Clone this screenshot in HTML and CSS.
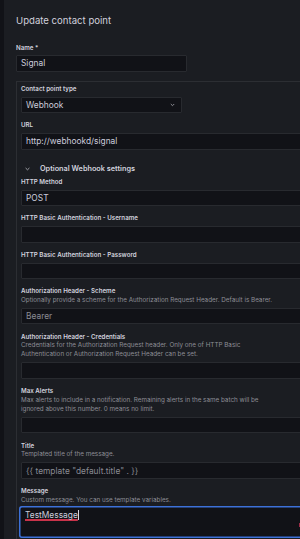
FILE: index.html
```html
<!DOCTYPE html>
<html lang="en">
<head>
<meta charset="utf-8">
<title>Update contact point</title>
<link rel="stylesheet" href="styles.css">
</head>
<body>
<div class="panel">
  <h2 class="title">Update contact point</h2>
  <div class="field name-field">
    <div class="head"><div class="label">Name *</div></div>
    <div class="input name-input">Signal</div>
  </div>
  <div class="channel">
    <div class="field">
      <div class="head"><div class="label">Contact point type</div></div>
      <div class="input select">
        <span>Webhook</span>
        <svg class="chev" width="5" height="4" viewBox="0 0 5 4"><path d="M0.8 1 L2.5 2.7 L4.2 1" fill="none" stroke="#9a9ba2" stroke-width="0.9"/></svg>
      </div>
    </div>
    <div class="field">
      <div class="head"><div class="label">URL</div></div>
      <div class="input">http://webhookd/signal</div>
    </div>
    <div class="collapse">
      <svg class="cchev" width="5" height="4" viewBox="0 0 5 4"><path d="M0.6 1 L2.5 2.8 L4.4 1" fill="none" stroke="#b0b1b8" stroke-width="0.9"/></svg>
      <span>Optional Webhook settings</span>
    </div>
    <div class="field">
      <div class="head"><div class="label">HTTP Method</div></div>
      <div class="input">POST</div>
    </div>
    <div class="field">
      <div class="head"><div class="label">HTTP Basic Authentication - Username</div></div>
      <div class="input"></div>
    </div>
    <div class="field">
      <div class="head"><div class="label">HTTP Basic Authentication - Password</div></div>
      <div class="input"></div>
    </div>
    <div class="field">
      <div class="head">
        <div class="label">Authorization Header - Scheme</div>
        <div class="desc">Optionally provide a scheme for the Authorization Request Header. Default is Bearer.</div>
      </div>
      <div class="input placeholder">Bearer</div>
    </div>
    <div class="field">
      <div class="head">
        <div class="label">Authorization Header - Credentials</div>
        <div class="desc">Credentials for the Authorization Request header. Only one of HTTP Basic<br>Authentication or Authorization Request Header can be set.</div>
      </div>
      <div class="input"></div>
    </div>
    <div class="field">
      <div class="head">
        <div class="label">Max Alerts</div>
        <div class="desc">Max alerts to include in a notification. Remaining alerts in the same batch will be<br>ignored above this number. 0 means no limit.</div>
      </div>
      <div class="input"></div>
    </div>
    <div class="field">
      <div class="head">
        <div class="label">Title</div>
        <div class="desc">Templated title of the message.</div>
      </div>
      <div class="input dim">{{ template "default.title" . }}</div>
    </div>
    <div class="field">
      <div class="head">
        <div class="label">Message</div>
        <div class="desc">Custom message. You can use template variables.</div>
      </div>
      <div class="textarea"><span class="spell">TestMessage</span><span class="caret"></span></div>
    </div>
  </div>
</div>
<span class="edge-mark"></span>
</body>
</html>
```
FILE: styles.css
```css
* {
  box-sizing: border-box;
  margin: 0;
  padding: 0;
}

html,
body {
  width: 300px;
  height: 539px;
  overflow: hidden;
}

body {
  background: #111217;
  font-family: Inter, "Noto Sans", sans-serif;
  color: #ccccdc;
  position: relative;
}

.panel {
  margin-left: 4px;
  width: 440px;
  min-height: 539px;
  background: #1b1d22;
  padding: 14.5px 0 0 12px;
}

.title {
  font-size: 9.6px;
  font-weight: 400;
  line-height: 12px;
  color: #d0d0dc;
  margin-bottom: 17px;
}

.field {
  margin-bottom: 8.3px;
}

.name-field {
  margin-bottom: 9.3px;
}

.head {
  margin-bottom: 3.2px;
}

.label {
  font-size: 6.2px;
  font-weight: 600;
  line-height: 8.5px;
  color: #d2d2de;
}

.desc {
  font-size: 6.3px;
  line-height: 9px;
  color: #8d8e96;
}

.input {
  height: 16.5px;
  background: #111217;
  border: 1px solid #282a2f;
  border-radius: 1px;
  font-size: 8.4px;
  display: flex;
  align-items: center;
  padding: 0 4px;
  color: #ccccdc;
  white-space: nowrap;
}

.name-input {
  width: 171px;
}

.placeholder,
.dim {
  color: #8a8b93;
}

.channel {
  border: 1px solid #2c2e33;
  border-right: none;
  padding: 3px 0 0 4px;
}

.select {
  width: 161px;
  justify-content: space-between;
  padding-right: 6px;
}

.chev {
  display: block;
}

.collapse {
  display: flex;
  align-items: center;
  height: 10px;
  margin: 14px 0 4.2px;
  font-size: 7.3px;
  font-weight: 600;
  color: #d2d2de;
}

.cchev {
  display: block;
  margin-left: 3.5px;
  margin-right: 10.5px;
}

.textarea {
  height: 28.5px;
  background: #111217;
  border: 1px solid #111217;
  box-shadow: 0 0 0 0.5px #111217, 0 0 0 2px #3d71d9;
  border-radius: 1px;
  font-size: 8.4px;
  line-height: 11px;
  padding: 1.5px 3px;
  color: #ccccdc;
  margin-right: -20px;
}

.spell {
  text-decoration: underline solid #c8334a;
  text-decoration-thickness: 1.5px;
  text-underline-offset: 1px;
}

.caret {
  display: inline-block;
  width: 1px;
  height: 10px;
  background: #d8d8e2;
  vertical-align: -2px;
  margin-left: 0.5px;
}

.edge-mark {
  position: absolute;
  left: 298.7px;
  top: 522.7px;
  width: 2px;
  height: 4px;
  background: #9b2d47;
}
```
